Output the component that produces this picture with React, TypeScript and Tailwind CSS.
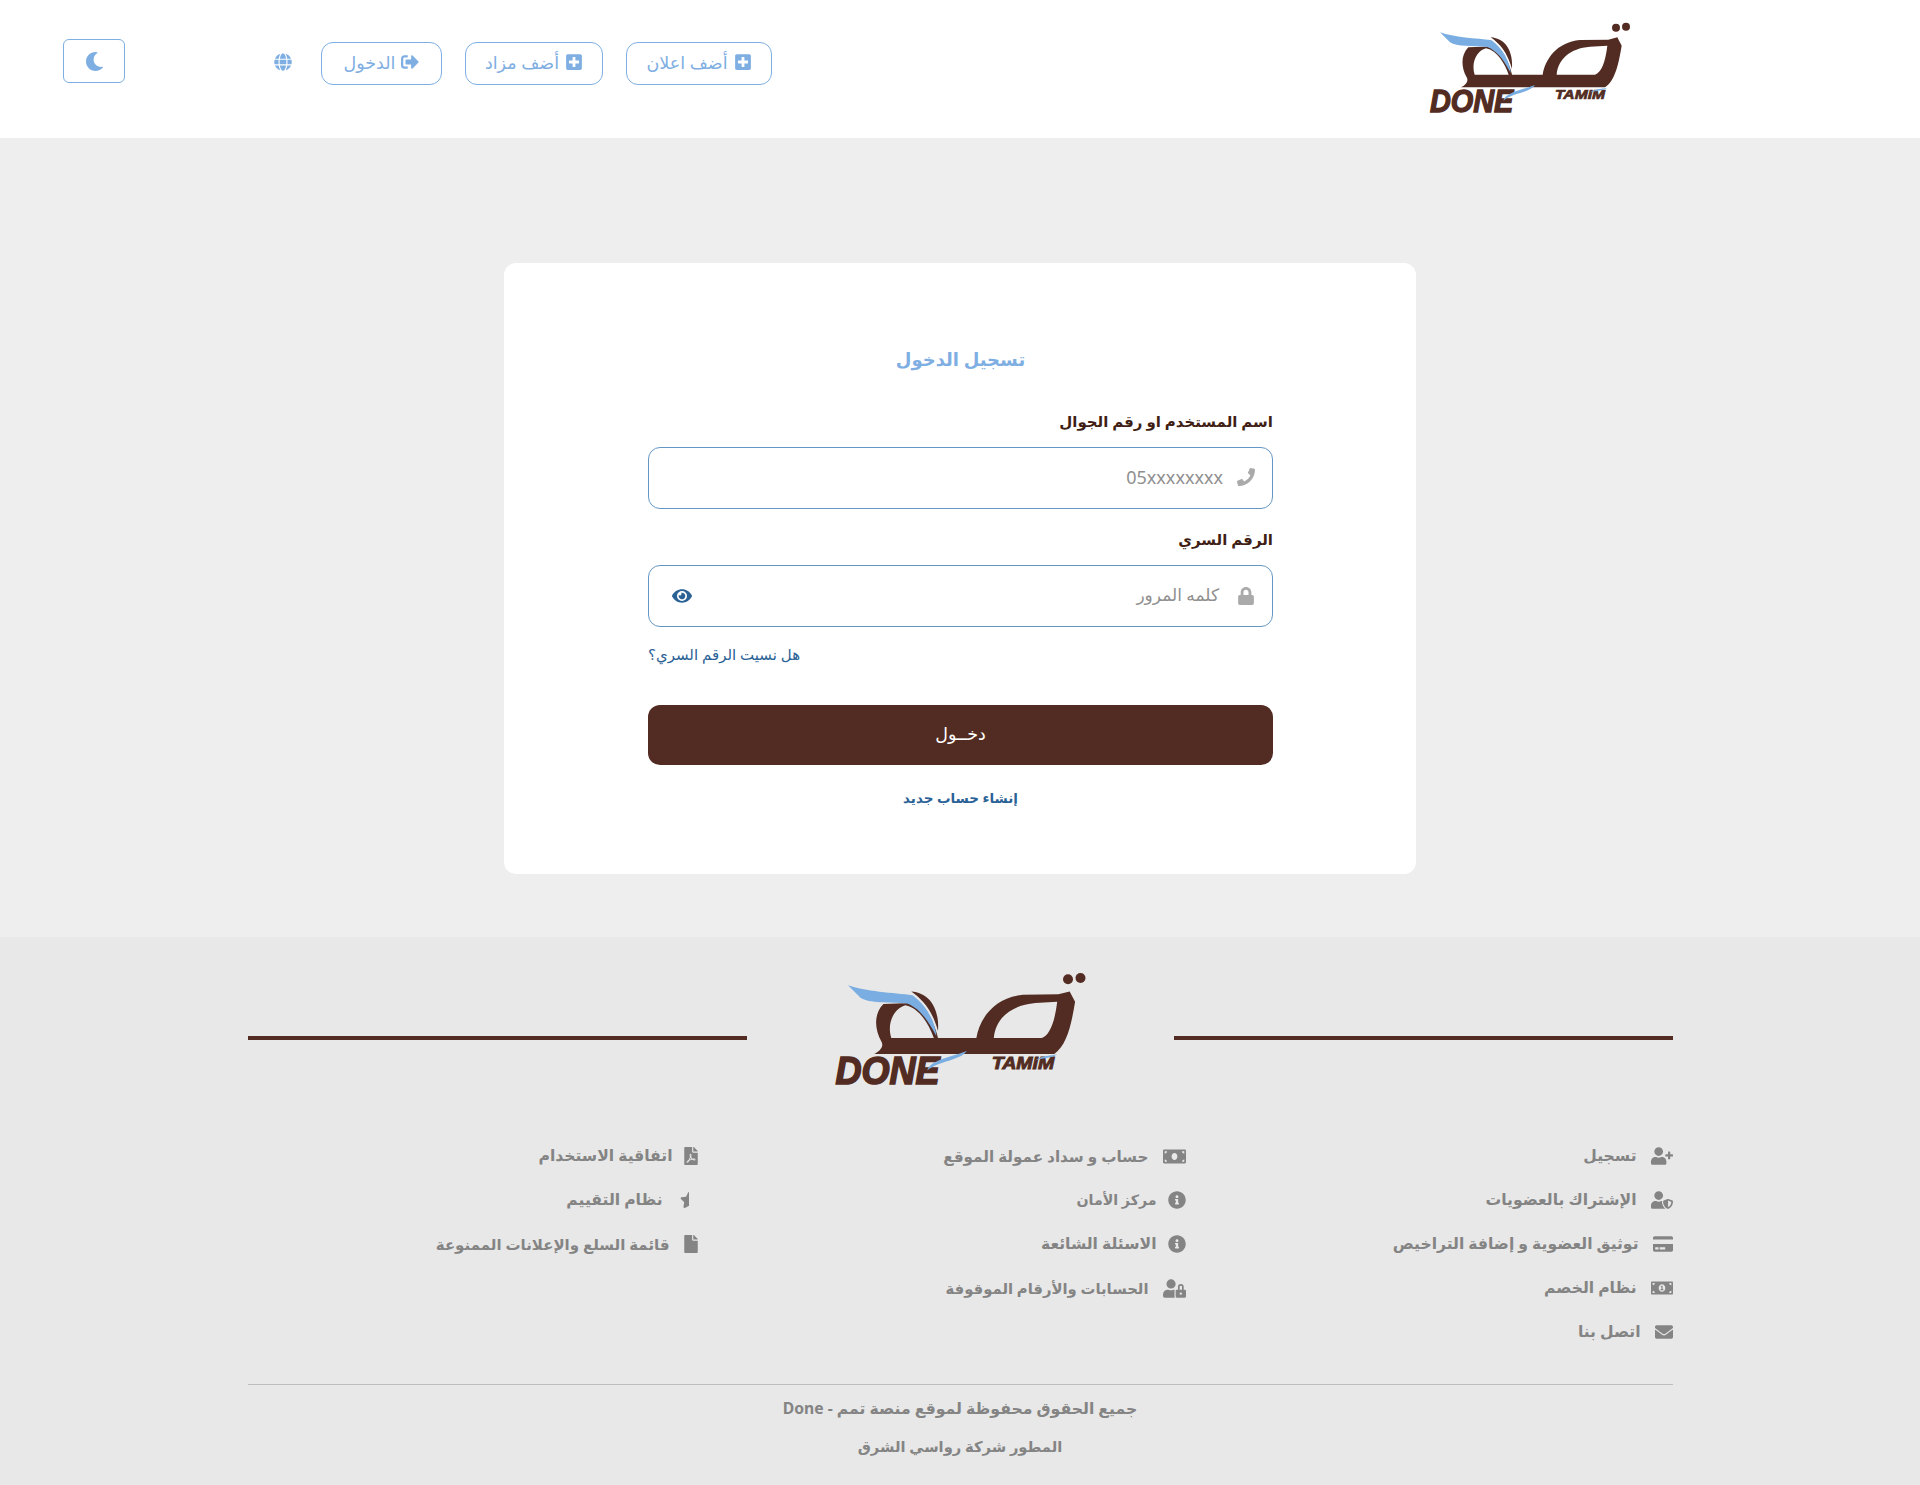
import React from "react";
import {
  FaPlusSquare,
  FaSignOutAlt,
  FaGlobe,
  FaMoon,
  FaPhone,
  FaLock,
  FaEye,
  FaUserPlus,
  FaUserShield,
  FaCreditCard,
  FaMoneyBill,
  FaMoneyBillAlt,
  FaEnvelope,
  FaInfoCircle,
  FaUserLock,
  FaFilePdf,
  FaStarHalf,
  FaFile,
} from "react-icons/fa";

const Logo = ({ className }: { className: string }) => (
  <svg viewBox="0 0 780 360" className={`[direction:ltr] ${className}`}>
    <circle cx="648" cy="56" r="12" fill="#522c22" />
    <circle cx="678" cy="53" r="12" fill="#522c22" />
    <path
      fillRule="evenodd"
      fill="#522c22"
      d="M183 235 C200 226 206 215 200 205 C183 175 182 138 205 115 L285 112 C318 140 330 170 336 197 L428 197 C436 150 470 100 540 93 L625 92 L652 85 L665 110 C656 165 645 215 615 235 Z M224 197 C212 160 232 124 258 118 C292 125 315 165 326 197 Z M470 197 C474 150 510 118 570 113 L622 110 C616 160 604 190 585 197 Z"
    />
    <path d="M272 85 C315 88 340 125 336 180 C322 130 300 105 272 85 Z" fill="#522c22" />
    <path
      d="M120 70 C160 85 230 88 275 94 C310 120 330 160 332 192 C310 150 290 125 262 114 C220 110 170 114 150 100 C140 90 130 80 120 70 Z"
      fill="#7aaee2"
    />
    <text x="90" y="308" fontFamily="Liberation Sans" fontStyle="italic" fontWeight="700" fontSize="95" textLength="250" lengthAdjust="spacingAndGlyphs" fill="#522c22" stroke="#522c22" strokeWidth="4">
      DONE
    </text>
    <path d="M310 275 C318 250 360 245 405 228 C388 252 340 250 310 275 Z" fill="#7aaee2" />
    <text x="465" y="270" fontFamily="Liberation Sans" fontStyle="italic" fontWeight="700" fontSize="38" textLength="150" lengthAdjust="spacingAndGlyphs" fill="#522c22" stroke="#522c22" strokeWidth="2">
      TAMIM
    </text>
    <path d="M570 250 C590 238 605 240 622 236 C610 246 590 244 570 250 Z" fill="#7aaee2" />
  </svg>
);

const HeaderButton = ({ icon, label, w }: { icon: React.ReactNode; label: string; w: string }) => (
  <button className={`${w} h-[43px] pb-[3px] flex items-center justify-center gap-[6px] border border-[#7eaee2] rounded-xl text-[#7eaee2] text-[17.5px] bg-white`}>
    <span className="text-[18px]">{icon}</span>
    {label}
  </button>
);

const FooterLink = ({ icon, label, w, size }: { icon: React.ReactNode; label: string; w: string; size?: string }) => (
  <li className={`h-[44px] flex items-center text-[#848484] font-bold ${size ?? "text-[15.6px]"}`}>
    <span className={`${w} flex justify-start text-[18px] shrink-0`}>{icon}</span>
    {label}
  </li>
);

export default function App() {
  return (
    <div dir="rtl" className="min-h-[1485px] bg-[#eeeeee] font-['Noto_Sans','DejaVu_Sans',sans-serif]">
      <header className="h-[138px] bg-white flex items-center pr-[260px]">
        <Logo className="w-[260px] h-[120px] shrink-0" />
        <div className="mr-[628px] mb-[11px] flex items-center gap-[23px]">
          <HeaderButton w="w-[146px]" icon={<FaPlusSquare />} label="أضف اعلان" />
          <HeaderButton w="w-[138px]" icon={<FaPlusSquare />} label="أضف مزاد" />
          <HeaderButton w="w-[121px]" icon={<FaSignOutAlt />} label="الدخول" />
          <FaGlobe className="text-[#7eaee2] text-[18px] mr-[6px] mb-[3px]" />
        </div>
        <button className="mr-[149px] mb-[16px] w-[62px] h-[44px] flex items-center justify-center border border-[#7eaee2] rounded-md text-[#7eaee2] text-[19px]">
          <FaMoon />
        </button>
      </header>

      <main className="h-[799px] pt-[125px]">
        <div className="w-[912px] h-[611px] mx-auto bg-white rounded-xl pl-[144px] pr-[143px] pt-[80px]">
          <h1 className="text-center text-[#7eaee2] text-[18px] font-bold h-[32px] leading-[32px]">تسجيل الدخول</h1>
          <label className="block mt-[30px] h-[32px] leading-[32px] text-[#3f1f15] text-[15px] font-bold">اسم المستخدم او رقم الجوال</label>
          <div className="mt-[10px] h-[62px] pb-[2px] border border-[#6497c4] rounded-xl flex items-center pr-[17px] text-[#8f8f8f] text-[18px] gap-[14px]">
            <FaPhone className="text-[#aaaaaa] text-[18px]" />
            <span>05xxxxxxxx</span>
          </div>
          <label className="block mt-[12px] h-[36px] leading-[36px] text-[#3f1f15] text-[15px] font-bold">الرقم السري</label>
          <div className="mt-[8px] h-[62px] border border-[#6497c4] rounded-xl flex items-center pr-[17px] pl-[23px] text-[#8f8f8f] text-[17px] gap-[18px]">
            <FaLock className="text-[#aaaaaa] text-[18px]" />
            <span className="pb-[2px]">كلمه المرور</span>
            <FaEye className="mr-auto text-[#2b6296] text-[20px]" />
          </div>
          <div className="mt-[15px] text-left text-[#2b6296] text-[15px] leading-[24px]" dir="ltr">
            <span dir="rtl">هل نسيت الرقم السري؟</span>
          </div>
          <button className="block w-full h-[60px] mt-[39px] pb-[3px] rounded-xl bg-[#522c22] text-white text-[17.5px]">دخــول</button>
          <div className="mt-[21px] text-center text-[#2b6296] text-[13.5px] font-bold leading-[24px]">إنشاء حساب جديد</div>
        </div>
      </main>

      <footer className="h-[548px] bg-[#e8e8e8]">
        <div className="w-[1425px] mx-auto">
          <div className="h-[184px] flex items-start justify-between">
            <div className="w-[499px] h-[4px] bg-[#522c22] mt-[99px]" />
            <Logo className="w-[325px] h-[150px] mt-[19px] shrink-0" />
            <div className="w-[499px] h-[4px] bg-[#522c22] mt-[99px]" />
          </div>
          <div className="grid grid-cols-[487px_488px_1fr] h-[263px] pt-[13px]">
            <ul>
              <FooterLink w="w-[36px]" icon={<FaUserPlus className="text-[22px]" />} label="تسجيل" />
              <FooterLink w="w-[36px]" icon={<FaUserShield className="text-[22px]" />} label="الإشتراك بالعضويات" />
              <FooterLink w="w-[34px]" icon={<FaCreditCard className="text-[20px]" />} label="توثيق العضوية و إضافة التراخيص" />
              <FooterLink w="w-[36px]" icon={<FaMoneyBillAlt className="text-[22px]" />} label="نظام الخصم" />
              <FooterLink w="w-[32px]" icon={<FaEnvelope />} label="اتصل بنا" />
            </ul>
            <ul>
              <FooterLink w="w-[37px]" size="text-[15.2px]" icon={<FaMoneyBill className="text-[23px]" />} label="حساب و سداد عمولة الموقع" />
              <FooterLink w="w-[29px]" size="text-[14.2px]" icon={<FaInfoCircle />} label="مركز الأمان" />
              <FooterLink w="w-[29px]" icon={<FaInfoCircle />} label="الاسئلة الشائعة" />
              <FooterLink w="w-[37px]" size="text-[14.8px]" icon={<FaUserLock className="text-[23px]" />} label="الحسابات والأرقام الموقوفة" />
            </ul>
            <ul>
              <FooterLink w="w-[25px]" icon={<FaFilePdf className="-mr-[2px]" />} label="اتفاقية الاستخدام" />
              <FooterLink w="w-[35px]" icon={<FaStarHalf />} label="نظام التقييم" />
              <FooterLink w="w-[28px]" size="text-[15px]" icon={<FaFile className="-mr-[2px]" />} label="قائمة السلع والإعلانات الممنوعة" />
            </ul>
          </div>
          <div className="border-t border-[#bdbdbd] pt-[4px] text-center text-[#848484] font-bold">
            <p className="h-[38px] leading-[38px] text-[15.7px]">جميع الحقوق محفوظة لموقع منصة تمم - Done</p>
            <p className="h-[38px] leading-[38px] text-[14.7px]">المطور شركة رواسي الشرق</p>
          </div>
        </div>
      </footer>
    </div>
  );
}
